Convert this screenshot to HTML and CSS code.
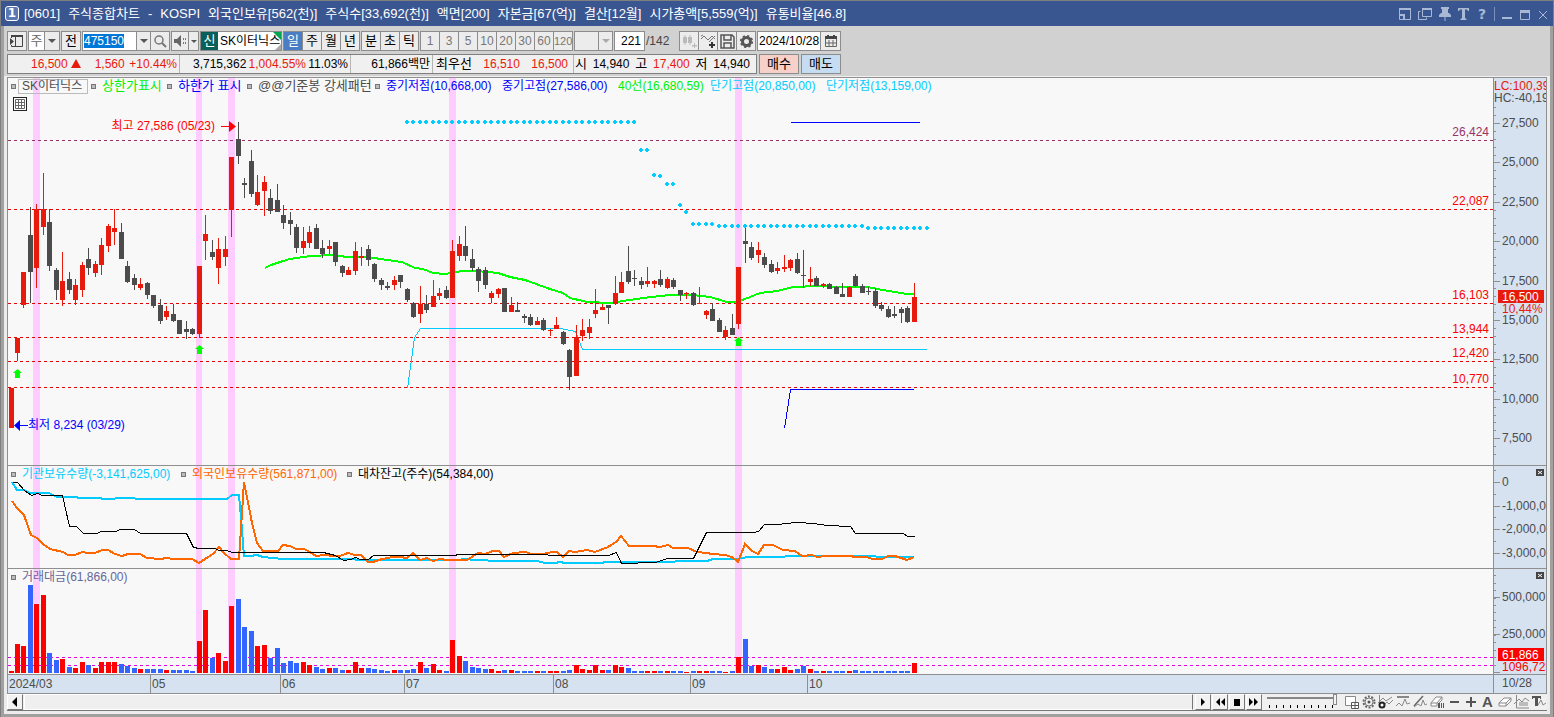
FILE: index.html
```html
<!DOCTYPE html>
<html lang="ko">
<head>
<meta charset="utf-8">
<title>[0601] 주식종합차트</title>
<link rel="stylesheet" href="styles.css">
</head>
<body>
<div class="window">
  <header class="titlebar">
    <span class="win-no">1</span>
    <h1 class="title">
      <span>[0601]</span><span>주식종합차트</span><span>-</span><span>KOSPI</span><span>외국인보유[562(천)]</span><span>주식수[33,692(천)]</span><span>액면[200]</span><span>자본금[67(억)]</span><span>결산[12월]</span><span>시가총액[5,559(억)]</span><span>유통비율[46.8]</span>
    </h1>
    <div class="win-tools">
      <button aria-label="축소"><svg width="14" height="14"><path d="M1.500 1.500h11v11h-11z" fill="none" stroke="currentColor"/><path d="M1 1h12v2H1z M1 7h6v6H5V9H1z" fill="currentColor"/></svg></button>
      <button aria-label="복제"><svg width="14" height="14"><path d="M4.500 1.500h9v8h-9z M2.500 4.500h-2v8h8v-2" fill="none" stroke="currentColor"/><path d="M4 1h10v2H4z" fill="currentColor"/></svg></button>
      <button aria-label="고정"><svg width="14" height="14"><path d="M3 0h8v2h-1v4h1l2 2v2H1V8l2-2h1V2H3z M6.500 10h1v4h-1z" fill="currentColor"/></svg></button>
      <button aria-label="글꼴"><svg width="11" height="14"><path d="M0 1h11v3h-1l-1-1.500H7V11l1.500 1v1h-6v-1L4 11V2.500H2L1 4H0z" fill="currentColor"/></svg></button>
      <button aria-label="도움말" class="t-help">?</button>
      <i class="sep"></i>
      <button aria-label="최소화"><svg width="12" height="14"><path d="M1 10h10v2H1z" fill="currentColor"/></svg></button>
      <button aria-label="최대화"><svg width="12" height="14"><path d="M1.500 3.500h9v9h-9z" fill="none" stroke="currentColor"/><path d="M1 3h10v3H1z" fill="currentColor"/></svg></button>
      <button aria-label="닫기"><svg width="12" height="14"><path d="M2 4l8 8M10 4l-8 8" stroke="currentColor" stroke-width="1"/></svg></button>
    </div>
  </header>

  <div class="frame">
    <div class="bars">
      <div class="toolbar">
        <button class="btn" aria-label="패널"><svg width="14" height="14"><path d="M1.500 4V1.500h11v11h-11V11" fill="none" stroke="#444"/><path d="M1 1h12v2H1z M0 4l4 3.500L0 11z M5 3h1v10H5z" fill="#444"/></svg></button>
        <div class="group">
          <button class="cell week">주</button><button class="cell drop" aria-label="주기 선택"><i class="caret"></i></button>
        </div>
        <button class="btn">전</button>
        <div class="group code">
          <input class="code-input" id="code" value="475150" aria-label="종목코드"><button class="cell drop" aria-label="종목 목록"><i class="caret"></i></button><button class="cell find" aria-label="검색"><svg width="13" height="13"><circle cx="5" cy="5" r="4" fill="none" stroke="#777" stroke-width="1.500"/><path d="M8 8l4 4" stroke="#777" stroke-width="2"/></svg></button>
        </div>
        <div class="group">
          <button class="cell sound" aria-label="소리"><svg width="13" height="12"><path d="M0 4h3l4-4v12L3 8H0z" fill="#666"/><path d="M9 3h1v2H9z M11 3h1v2h-1z M9 7h1v2H9z M11 7h1v2h-1z" fill="#777"/></svg></button><button class="cell mini" aria-label="소리 설정"><i class="caret"></i></button>
        </div>
        <div class="stock"><b>신</b><span>SK이터닉스</span></div>
        <div class="group periods"><button class="cell on">일</button><button class="cell">주</button><button class="cell">월</button><button class="cell">년</button></div>
        <div class="group periods"><button class="cell">분</button><button class="cell">초</button><button class="cell">틱</button></div>
        <div class="group periods dim"><button class="cell">1</button><button class="cell">3</button><button class="cell">5</button><button class="cell">10</button><button class="cell">20</button><button class="cell">30</button><button class="cell">60</button><button class="cell">120</button></div>
        <div class="group blank"><button class="cell drop" aria-label="분 선택" disabled><i class="caret pale"></i></button></div>
        <input class="count" value="221" aria-label="표시 개수"><span class="total">/142</span>
        <div class="group tools">
          <button class="cell" aria-label="차트 추가" disabled><svg width="15" height="15"><path d="M1 3h4v6H1z M6 3h4v6H6z M2.500 1h1v10h-1z M7.500 1h1v10h-1z M10 11h5v1.500h-5z M12 9h1v5h-1z" fill="#bbb"/></svg></button><button class="cell" aria-label="지표 추가"><svg width="15" height="15"><path d="M0 5l3-3 4 4 4-4 3 3M0 2l2-1M8 8l6-6" fill="none" stroke="#777"/><path d="M8 10h6v2H8z M10 8h2v6h-2z" fill="#333"/></svg></button><button class="cell" aria-label="저장"><svg width="15" height="15"><path d="M1 1h11l2 2v11H1z M4 1v5h7V1 M4 14V9h7v5" fill="none" stroke="#555" stroke-width="1.500"/></svg></button><button class="cell" aria-label="설정"><svg width="15" height="15"><circle cx="7.500" cy="7.500" r="4" fill="none" stroke="#555" stroke-width="3"/><circle cx="7.500" cy="7.500" r="5.800" fill="none" stroke="#555" stroke-width="1.600" stroke-dasharray="2.200 2.350"/></svg></button>
        </div>
        <div class="group date"><input class="date-input" value="2024/10/28" aria-label="기준일"><button class="cell" aria-label="달력"><svg width="12" height="12"><path d="M.500 2.500h11v9H.500z M4 5v6M8 5v6M1 8h10" fill="none" stroke="#666"/><path d="M0 1h12v3H0z M2 0h2v2H2z M8 0h2v2H8z" fill="#444"/></svg></button></div>
      </div>

      <div class="quote">
        <div class="quote-box">
          <div class="q q1"><span class="up">16,500 <i class="tri"></i></span><span class="up v2">1,560</span><span class="up v3">+10.44%</span></div>
          <div class="q q2"><span>3,715,362</span><span class="up">1,004.55%</span><span>11.03%</span></div>
          <div class="q q3"><span>61,866백만</span></div>
          <div class="q q4"><b>최우선</b><span class="up">16,510</span><span class="up">16,500</span></div>
          <div class="q q5"><b>시</b><span>14,940</span><b>고</b><span class="up">17,400</span><b>저</b><span>14,940</span></div>
        </div>
        <button class="trade buy">매수</button>
        <button class="trade sell">매도</button>
      </div>
    </div>

    <main class="chart">
      <section class="pane price">
        <svg class="plot" id="price"></svg>
        <div class="legend">
          <i class="mk"></i><span class="name">SK이터닉스</span>
          <i class="mk"></i><span class="ko w66 green">상한가표시</span>
          <i class="mk"></i><span class="ko w70 blue">하한가 표시</span>
          <i class="mk"></i><span class="ko w118 dark">@@기준봉 강세패턴</span>
          <i class="mk"></i><span class="w116 blue">중기저점(10,668,00)</span>
          <span class="w116 blue">중기고점(27,586,00)</span>
          <span class="w92 green">40선(16,680,59)</span>
          <span class="w116 cyan">단기고점(20,850,00)</span>
          <span class="w116 cyan">단기저점(13,159,00)</span>
        </div>
        <button class="grid-btn" aria-label="표"><svg width="12" height="12"><path d="M1.500 1.500h9v9h-9z M1 4.500h10 M1 7.500h10 M4.500 1v10 M7.500 1v10" fill="none" stroke="#666"/></svg></button>
      </section>
      <svg class="axis price-axis" id="price-axis"></svg>

      <section class="pane hold">
        <svg class="plot" id="hold"></svg>
        <div class="legend">
          <i class="mk"></i><span class="w160 cyan">기관보유수량(-3,141,625,00)</span>
          <i class="mk"></i><span class="w156 orange">외국인보유수량(561,871,00)</span>
          <i class="mk"></i><span class="black">대차잔고(주수)(54,384,00)</span>
        </div>
      </section>
      <svg class="axis hold-axis" id="hold-axis"></svg>

      <section class="pane vol">
        <svg class="plot" id="vol"></svg>
        <div class="legend"><i class="mk"></i><span class="violet">거래대금(61,866,00)</span></div>
      </section>
      <svg class="axis vol-axis" id="vol-axis"></svg>

      <svg class="dates" id="dates"></svg>
      <div class="last-date">10/28</div>
    </main>

    <footer class="bottom">
      <button class="sb" aria-label="왼쪽"><svg width="8" height="10"><path d="M6 0v10L1 5z"/></svg></button>
      <div class="track"></div>
      <button class="sb" aria-label="오른쪽"><svg width="8" height="10"><path d="M2 1v8l4-4z"/></svg></button>
      <button class="sb" aria-label="뒤로"><svg width="10" height="10"><path d="M5 1v8L1 5z M10 1v8L6 5z"/></svg></button>
      <button class="sb" aria-label="정지"><svg width="8" height="10"><path d="M1 2h6v7H1z"/></svg></button>
      <button class="sb" aria-label="앞으로"><svg width="10" height="10"><path d="M0 1v8l4-4z M5 1v8l4-4z"/></svg></button>
      <div class="speed"><input type="range" min="0" max="10" value="10" aria-label="재생 속도"><i class="ticks"></i></div>
      <div class="draw">
        <button aria-label="창 추가"><svg width="14" height="14"><path d="M.500 1.500h10v9h-10z" fill="#fff" stroke="#888"/><path d="M6.500 7.500h7v6h-7z M10 7v7M6 10.500h8" fill="#fff" stroke="#555"/></svg></button>
        <button aria-label="환경"><svg width="14" height="14"><circle cx="7" cy="7" r="5.500" fill="none" stroke="#666" stroke-width="2" stroke-dasharray="2 1.450"/><circle cx="7" cy="7" r="4" fill="none" stroke="#777"/><circle cx="7" cy="7" r="1.500" fill="#555"/></svg></button>
        <button aria-label="지표"><svg width="16" height="14"><path d="M1.500 0v9M0 8l5-5 3 3 6-4M6 10l3-3 2 2 4-4" fill="none" stroke="#888"/><circle cx="4" cy="10" r="2.500" fill="#fff" stroke="#222" stroke-width="2"/></svg></button>
        <button aria-label="수평선"><svg width="14" height="14"><path d="M1 2h12" stroke="#666" stroke-width="1.500"/><path d="M0 11l3-3 3 3 3-7 2 5 3-1" fill="none" stroke="#888"/></svg></button>
        <button aria-label="추세선"><svg width="14" height="14"><path d="M1 11L10 1" stroke="#666" stroke-width="1.500"/><path d="M1 12l4-3 3 2 2-6 2 5 2-1" fill="none" stroke="#888"/></svg></button>
        <button aria-label="전체 지우기"><svg width="14" height="14"><path d="M1 8l5-6h6l-5 6z M1 8v3h6V8 M12 2v3l-3 3" fill="#fff" stroke="#888"/><path d="M8 8h2v5H8z M11 8h1v5h-1z M13 8h1v5h-1z" fill="#555"/></svg></button>
        <button aria-label="축소"><svg width="14" height="14"><path d="M3 6h9v2H3z" fill="#555"/></svg></button>
        <button aria-label="확대"><svg width="14" height="14"><path d="M2 6h10v2H2z M6 2h2v10H6z" fill="#555"/></svg></button>
        <button aria-label="문자" class="glyph">A</button>
        <button aria-label="지우개"><svg width="14" height="14"><path d="M1 8l5-5h7l-5 5z M1 8v3h7V8 M13 3v3l-5 5" fill="#fff" stroke="#888"/></svg></button>
        <button aria-label="분석"><svg width="16" height="14"><path d="M2.500 0v13H15M0 9l5-5 3 3 3-4 4 3M5 10h9M5 8h9" fill="none" stroke="#888"/></svg></button>
        <button aria-label="텍스트 도구"><svg width="14" height="14"><path d="M0 1h9v3H8V3H6v8H3V3H1v1H0z" fill="#555"/><path d="M6 10l3-5 2 5 3-2" fill="none" stroke="#888"/></svg></button>
      </div>
    </footer>
  </div>
</div>
<script src="app.js"></script>
</body>
</html>
```

FILE: styles.css
```css
* { box-sizing: border-box; }
body {
  margin: 0;
  background: #a0a09e;
  font: 12px/16px "Liberation Sans", "Noto Sans CJK KR", sans-serif;
  color: #000;
}
button, input { font: inherit; color: inherit; margin: 0; padding: 0; border: 0; border-radius: 0; }
button { background: none; }
svg { display: block; }

.window {
  border: 1px solid #7f7f7f;
  border-bottom: 0;
}

/* title bar */
.titlebar {
  display: flex;
  align-items: center;
  height: 25px;
  padding: 0 4px 0 4px;
  background: #3a5691;
  color: #fff;
}
.win-no {
  width: 14px;
  height: 15px;
  border: 1px solid #fff;
  border-radius: 3px;
  background: #5d78b0;
  font: bold 12px/13px "DejaVu Sans", sans-serif;
  text-align: center;
}
.title {
  display: flex;
  gap: 8px;
  flex: 1;
  margin: 0 0 0 5px;
  font-size: 13px;
  font-weight: 400;
  white-space: nowrap;
}
.win-tools { display: flex; align-items: center; color: #a9b8d4; gap: 6px; }
.win-tools button { display: block; height: 16px; min-width: 12px; }
.t-help { font: bold 14px/16px "DejaVu Sans", sans-serif; }
.sep { width: 1px; height: 14px; background: #7d8fb8; }

/* frame */
.frame {
  border: 3px solid #a0a09e;
  border-top: 0;
  border-bottom-width: 4px;
  background: #ececec;
}
.bars { background: #d1d1d1; padding: 5px 3px 2px; border-bottom: 1px solid #f0f0f0; }

.toolbar { display: flex; height: 20px; gap: 1px; }
.btn, .group, .stock, .count {
  height: 20px;
  border: 1px solid #8c8c8c;
  background: #ececec;
}
.btn { width: 20px; display: grid; place-items: center; font-size: 13px; }
.group { display: flex; }
.cell {
  display: grid;
  place-items: center;
  width: 19px;
  height: 18px;
  border-right: 1px solid #8c8c8c;
  background: #ececec;
  font-size: 13px;
}
.group .cell:last-child { border-right: 0; }
.cell.week { width: 16px; background: #fff; color: #666; }
.cell.drop { width: 14px; }
.cell.mini { width: 9px; }
.cell.sound { width: 17px; }
.cell.find { width: 18px; }
.caret { border: 4px solid transparent; border-top-color: #555; border-bottom: 0; }
.mini .caret { border-width: 3px; border-bottom: 0; }
.caret.pale { border-top-color: #aaa; }
.code { background: #fff; }
.code-input { width: 54px; height: 18px; padding-left: 1px; background: #fff; border-right: 1px solid #8c8c8c; outline: 0; }
.code-input::selection { background: #0078d7; color: #fff; }
.stock { position: relative; display: flex; width: 82px; background: #fff; overflow: hidden; white-space: nowrap; }
.stock b { width: 17px; background: #0a6058; color: #fff; font-weight: 400; font-size: 13px; text-align: center; line-height: 18px; }
.stock span { padding-left: 2px; line-height: 18px; }
.stock::before, .stock::after { content: ""; position: absolute; right: 0; border: 4px solid; }
.stock::before { top: 0; border-color: #00a650 #00a650 transparent transparent; }
.stock::after { bottom: 0; border-width: 3px; border-color: transparent #aaa #aaa transparent; }
.cell.on { background: #4a7ec4; color: #fff; }
.periods .cell:last-child { width: 18px; }
.dim .cell { font-size: 12px; color: #777; }
.dim .cell:last-child { font-size: 11px; }
.blank { width: 39px; justify-content: flex-end; }
.blank .cell { border-left: 1px solid #8c8c8c; }
.count { width: 31px; padding-right: 3px; background: #fff; text-align: right; }
.total { line-height: 20px; width: 32px; color: #444; }
.tools { width: 77px; }
.tools .cell:last-child { width: 18px; }
.date-input { width: 63px; height: 18px; padding-left: 1px; border-right: 1px solid #8c8c8c; background: #fff; }

.quote { display: flex; gap: 2px; margin-top: 3px; height: 20px; white-space: nowrap; }
.quote b { font-size: 13px; font-weight: 400; }
.quote-box { display: flex; width: 750px; border: 1px solid #7f7f7f; background: #f0f0f0; line-height: 18px; }
.q { display: flex; justify-content: space-between; border-right: 1px solid #b5b5b5; }
.q:last-child { border-right: 0; }
.up { color: #e81a0c; }
.tri { display: inline-block; border: 5px solid transparent; border-top: 0; border-bottom: 9px solid #e81a0c; }
.q1 { width: 172px; padding: 0 2px 0 23px; }
.q1 .v2 { margin-left: 9px; }
.q2 { width: 171px; padding: 0 2px 0 13px; }
.q3 { width: 82px; justify-content: flex-end; padding-right: 2px; }
.q4 { width: 141px; padding: 0 5px 0 3px; }
.q5 { flex: 1; padding: 0 6px 0 1px; }
.trade { width: 40px; height: 20px; border: 1px solid #8c8c8c; font-size: 13px; }
.buy { background: #f6d0c9; }
.sell { background: #c6dcf2; }

/* chart */
.chart {
  display: grid;
  grid-template-columns: 1fr 53px;
  margin: 0 3px;
  border: 1px solid #8f8f8f;
  background: #f8f8f8;
}
.pane { position: relative; min-width: 0; border-bottom: 1px solid #8f8f8f; overflow: hidden; }
.plot { width: 100%; height: 100%; }
.price, .price-axis { height: 388px; }
.hold, .hold-axis { height: 103px; }
.vol, .vol-axis { height: 106px; }
.axis {
  width: 100%;
  background: #d6e2f0;
  border-left: 1px solid #8f8f8f;
  border-bottom: 1px solid #8f8f8f;
}
.legend { position: absolute; left: 3px; top: 0; display: flex; align-items: center; height: 16px; white-space: nowrap; }
.mk { width: 5px; height: 5px; border: 1px solid #777; background: #bbb; margin-right: 6px; }
.ko { font-size: 13px; }
.name { border: 1px solid #bbb; width: 70px; height: 15px; line-height: 13px; padding-left: 3px; margin: 0 3px 0 -4px; color: #4c4c4c; }
.w66 { width: 65px; }
.w70 { width: 69px; }
.w118 { width: 117px; }
.w116 { width: 116px; }
.w92 { width: 92px; }
.w160 { width: 159px; }
.w156 { width: 155px; }
.green { color: #00f000; }
.blue { color: #00f; }
.dark { color: #4c4c4c; }
.cyan { color: #00ccff; }
.orange { color: #ff6600; }
.black { color: #000; }
.violet { color: #669; }
.grid-btn { position: absolute; left: 5px; top: 19px; width: 14px; height: 14px; border: 1px solid #222; background: #fff; }
.dates, .last-date { height: 18px; background: #d6e2f0; }
.dates { width: 100%; }
.last-date { border-left: 1px solid #8f8f8f; padding-left: 8px; color: #4c4c4c; }

/* bottom bar */
.bottom { display: flex; align-items: stretch; height: 17px; margin: 0 3px 3px; background: #f0f0f0; border-bottom: 1px solid #777; }
.sb { width: 16px; margin-right: 1px; display: grid; place-items: center; background: #f2f2f2; border: 1px solid #fff; border-right-color: #777; border-bottom-color: #777; }
.track { flex: 1; margin-right: 2px; background: #efefef; border: 1px solid #fff; border-right-color: #777; }
.speed { width: 72px; margin-left: 4px; display: flex; flex-direction: column; }
.speed input { appearance: none; width: 70px; height: 11px; background: linear-gradient(#888, #888) 0 3px / 100% 2px no-repeat; }
.speed input::-webkit-slider-thumb { appearance: none; width: 4px; height: 11px; background: #f4f4f4; border: 1px solid #888; }
.ticks { height: 3px; margin-left: 2px; background: repeating-linear-gradient(90deg, #000 0 1px, transparent 1px 7px); width: 68px; }
.draw { display: flex; width: 204px; margin-left: 4px; }
.draw button { width: 17px; display: grid; place-items: center; }
.glyph { font: bold 15px/16px "Liberation Sans", sans-serif; color: #555; }
```

FILE: app.js
```js
const RED = '#e81a0c', GRAY = '#4c4c4c';

// colour, high, body top, body bottom, low
const candles = `R388,388,428,428 R338,338,353,361 R272,272,305,308 G207,235,272,303 R204,209,268,288 R173,209,227,235
G209,222,266,271 G268,270,290,300 R252,281,300,306 G272,279,290,294 R279,285,300,305 R262,265,290,297
G248,259,268,275 R261,264,273,277 R238,245,265,275 R224,226,246,252 R209,228,232,245 G223,232,259,259
G261,266,282,283 G274,278,285,290 R278,284,288,290 G282,283,295,299 G295,295,306,308 G299,305,321,324
R306,311,317,320 G304,314,321,322 G320,320,334,334 G321,329,332,339 G328,329,334,335 R266,266,334,338
R215,234,241,260 G240,252,257,260 R238,249,268,284 R236,249,257,266 R157,157,210,237 G122,139,156,164
G178,183,185,198 G150,161,194,197 R175,192,205,206 R176,182,191,216 G189,198,211,214 G184,200,212,212
G205,215,223,229 G212,220,224,235 G224,227,248,253 R227,241,248,254 R226,232,243,248 G224,228,249,249
G240,248,254,258 R240,246,249,254 G242,242,262,266 G265,266,273,277 R267,270,275,275 R242,251,271,275
R247,256,258,266 G245,249,260,266 G263,264,279,282 G278,280,285,290 G282,286,288,290 R276,280,285,290
G275,275,282,288 G288,289,300,302 G302,303,317,318 R286,304,314,323 G295,304,310,313 R280,296,307,307
R288,293,296,300 G286,290,298,299 R240,251,298,298 R236,244,256,261 G226,246,256,261 G249,259,268,271
G267,269,281,292 G267,270,285,289 R291,293,298,303 R288,289,294,298 G288,288,312,312 R297,305,312,312
G302,310,312,312 G314,316,318,323 G314,317,325,326 R317,321,325,325 G318,320,330,331 R329,330,331,336
R317,325,329,329 G331,332,344,345 G349,350,377,390 R325,337,376,376 R319,330,336,341 R319,327,333,339
R289,310,314,318 R304,307,310,310 G305,305,308,324 R276,293,304,305 R272,282,293,293 G246,271,282,284
G270,278,279,286 G277,281,285,289 R267,281,284,287 R280,281,284,288 G270,279,285,287 R277,279,288,289
G278,280,287,289 G290,290,295,301 R292,293,294,299 G292,293,305,306 R287,303,304,304 R310,311,315,319
G303,309,321,321 G318,320,332,332 R326,330,337,340 G314,328,335,335 R267,267,324,329 G228,241,244,263
G242,247,258,260 R242,250,255,263 G253,257,265,268 G260,264,272,273 R262,268,271,274 R255,267,269,272
R259,260,268,271 G253,259,273,274 G250,275,276,288 R267,279,282,286 G276,278,286,286 R283,284,286,288
G283,284,289,289 G286,287,294,294 G283,294,297,297 R286,287,297,297 G274,276,286,287 G284,286,293,293
G287,291,292,295 G288,291,306,308 G302,305,309,311 G306,309,317,318 G306,314,316,318 G307,309,313,323
G306,308,322,323 R283,297,322,322`.split(/\s+/).map(s => [s[0], ...s.slice(1).split(',').map(Number)]);

// colour and bar top
const volume = `R671 R644 R646 B585 R604 R595 B653 B660 R659 B667 R668 R662 B665 R668 R662 R662 R662 B664 B666 B668
R669 B669 B669 B669 R670 B670 B670 B670 B671 R641 R610 B658 R653 R661 R606 B599 B627 B631 R646 R645
B658 B648 B663 B661 B663 R662 R665 B667 B669 R668 B668 B670 R670 R662 R668 B668 B669 B670 B671 R670
B670 B670 B669 R662 B668 R664 R670 B671 R640 R656 B661 B667 B668 B669 R669 R671 B670 R670 B671 B671
B671 R671 B671 R671 R671 B671 B670 R665 R669 R670 R665 R670 B670 R665 R667 B668 B671 B671 R671 R671
B671 R671 B671 B671 R672 B671 R671 R671 B671 B671 R672 B671 R657 B639 B666 R665 B667 B669 R669 R667
R670 B669 B666 R669 B671 R671 B671 B671 B671 R671 B670 B671 B671 B671 B671 B671 B671 B671 B671 R663`.split(/\s+/);

const ma40 = '265,268 271,265 283,261 290,259 310,256 333,255 347,257 368,257 387,260 402,262 415,268 423,269 433,273 445,274 462,271 477,271 498,273 510,277 525,280 550,289 563,293 570,298 587,302 610,303 623,301 643,298 670,295 693,295 710,297 727,302 737,302 750,297 760,293 777,291 793,287 817,286 843,287 867,287 883,290 907,294 915,294';
const inst = '12,482 17,490 24,490 30,493 49,493 57,497 75,497 80,498 100,498 103,499 113,499 117,498 133,498 137,499 227,499 232,495 239,495 241,517 244,556 250,556 257,555 263,557 283,559 353,559 358,560 457,560 465,559 475,560 500,561 537,561 545,563 555,563 560,562 565,563 602,563 605,562 673,562 677,561 707,561 713,559 737,559 748,557 783,557 787,556 875,556 877,557 914,557';
const foreign = '12,501 17,508 24,515 31,535 37,538 43,544 50,549 63,552 68,555 75,555 82,552 88,553 95,553 102,550 108,550 115,554 122,556 128,554 140,554 147,558 160,559 167,558 173,559 192,559 199,563 205,559 213,554 219,547 224,553 231,559 239,559 244,482 252,523 257,543 263,551 278,551 283,545 290,546 296,549 304,549 310,552 316,556 325,555 333,556 340,556 348,553 355,555 361,555 368,562 373,562 382,559 393,557 400,557 407,558 413,553 420,560 427,558 433,561 440,559 447,560 467,560 478,553 485,554 493,551 499,551 504,557 513,553 525,552 532,554 543,554 552,552 557,552 563,557 569,551 575,552 587,550 595,552 608,547 616,542 621,536 629,546 653,546 660,547 668,545 673,548 688,548 697,552 707,553 712,554 725,555 732,557 738,562 745,544 752,551 758,554 764,545 773,545 783,550 795,551 802,556 812,555 817,557 825,556 850,556 855,557 867,557 872,559 882,559 888,556 895,556 907,560 914,557';
const loan = '12,482 17,482 24,490 31,495 37,493 42,495 62,495 69,526 76,526 83,533 97,533 100,531 115,531 120,529 134,529 140,533 186,533 193,547 199,548 215,548 218,550 226,550 232,552 323,552 335,555 343,560 350,559 355,557 360,559 368,559 373,555 455,555 457,554 547,554 548,555 608,555 616,552 621,563 637,563 638,562 655,562 667,558 693,558 706,532 753,532 758,531 764,524 780,524 783,523 798,522 813,523 827,525 850,526 855,533 903,533 907,536 914,536';

const xAt = i => Math.max(11, Math.floor(6.5 * i + 10.5));
const rect = (x, y, w, h, fill) => `<rect x="${x}" y="${y}" width="${w}" height="${h}" fill="${fill}"/>`;
const poly = (pts, color, w) => `<polyline points="${pts}"${w === 1 ? ' transform="translate(.5 .5)"' : ''} fill="none" stroke="${color}" stroke-width="${w}" shape-rendering="crispEdges"/>`;
const dashed = (y, color) => `<line x1="0" x2="100%" y1="${y + .5}" y2="${y + .5}" stroke="${color}" stroke-dasharray="3 3"/>`;
const text = (x, y, s, fill, anchor) => `<text x="${x}" y="${y}" fill="${fill}"${anchor ? ` text-anchor="${anchor}"` : ''}>${s}</text>`;
const LEFT = 8;
const place = (top, body) => `<g transform="translate(${-LEFT} ${-top})">${body}</g>`;
const bands = (top, h) => [[33, 7], [196, 6], [228, 7], [449, 7], [735, 7]].map(([x, w]) => rect(x, top, w, h, '#ffccff')).join('');
const show = (id, html) => { document.getElementById(id).innerHTML = html; };

// price pane
const P = 78;
const levels = [[140, '26,424', '#993366'], [209, '22,087', '#f00'], [303, '16,103', '#f00'], [337, '13,944', '#f00'], [361, '12,420', '#f00'], [387, '10,770', '#f00']];
const dotY = i => i < 97 ? 122 : i < 99 ? 150 : i < 100 ? 175 : i < 101 ? 176 : i < 103 ? 184 : i < 104 ? 205 : i < 105 ? 212 : i < 109 ? 224 : i < 132 ? 226 : 228;
const lines = levels.map(([y, , c]) => dashed(y - P, c === '#f00' ? '#e00000' : c)).join('');
let over = poly(ma40, '#00ff00', 2);
over += poly('407,388 414,337 420,328 560,328 575,331 582,349 926,349', '#00ccff', 1);
candles.forEach(([c, hi, top, bot, lo], i) => {
  const x = xAt(i), col = c === 'R' ? RED : GRAY;
  over += rect(x, hi, 1, Math.max(1, lo - hi), col) + rect(x - 2, top, 5, Math.max(1, bot - top), col);
});
for (let i = 61; i <= 141; i++) {
  const x = xAt(i), y = dotY(i);
  over += rect(x - 2, y - 1, 4, 2, '#00ccff') + rect(x - 1, y - 2, 2, 4, '#00ccff');
}
over += poly('790,122 919,122', '#00f', 1) + poly('784,428 790,389 913,389', '#00f', 1);
[[17, 369], [199, 345], [738, 337]].forEach(([x, y]) => {
  over += `<path d="M${x + .5} ${y}l4.500 4h-2v5h-5v-5h-2z" fill="#00ff00"/>`;
});
over += '<path d="M221 126h8v-5l7 5.500-7 5.500v-5h-8z" fill="#f00"/>' + text(215, 130, '최고 27,586 (05/23)', '#f00', 'end');
over += '<path d="M28 425h-8v-5l-6 5.500 6 5.500v-5h8z" fill="#00f"/>' + text(28, 429, '최저 8,234 (03/29)', '#00f');
show('price', place(P, bands(P, 388)) + lines + place(P, over) +
  `<svg x="100%" overflow="visible">${levels.map(([y, s, c]) => text(-4, y - P - 4, s, c, 'end')).join('')}</svg>`);

// holdings pane
const H = 466;
show('hold', place(H, bands(H, 103) + poly(inst, '#00ccff', 2) + poly(foreign, '#ff6600', 2) + poly(loan, '#000', 1)));

// turnover pane
const V = 569;
show('vol', place(V, bands(V, 104)) + dashed(657 - V, '#e000e0') + dashed(665 - V, '#e000e0') +
  place(V, volume.map((s, i) => rect(xAt(i) - 2, +s.slice(1), 5, 673 - s.slice(1), s[0] === 'R' ? '#ff0000' : '#3366ff')).join('')));

// value axes
const tick = (y, w) => rect(0, y, w, 1, '#8f8f8f');
let a = text(0, 12, 'LC:100,39', RED) + text(0, 24, 'HC:-40,19', GRAY);
['27,500', '25,000', '22,500', '20,000', '17,500', '15,000', '12,500', '10,000', '7,500'].forEach((s, i) => {
  const y = Math.round(45 + i * 39.4);
  a += tick(y, 6) + text(8, y + 4, s, GRAY);
});
for (let k = -2; k < 43; k++) if (k % 5) a += tick(Math.round(45 + k * 7.88), 2);
a += rect(7, 226, 38, 10, '#d6e2f0') + rect(4, 212, 46, 13, RED) + text(8, 223, '16,500', '#fff') + text(8, 235, '10,44%', RED);
show('price-axis', a);

const close = y => rect(42, y, 8, 7, '#444') + `<path d="M44 ${y + 2}l4 3m0-3l-4 3" stroke="#fff"/>`;
a = close(3);
['0', '-1,000,0', '-2,000,0', '-3,000,0'].forEach((s, i) => {
  const y = Math.round(16 + i * 23.7);
  a += tick(y, 6) + text(8, y + 4, s, GRAY) + tick(y - 12, 2);
});
show('hold-axis', a);

a = close(3) + tick(28, 6) + text(8, 32, '500,000', GRAY) + tick(65, 6) + text(8, 69, '250,000', GRAY) + tick(103, 6);
for (let k = 0; k < 14; k++) a += tick(Math.round(103 - k * 7.45), 2);
a += rect(4, 79, 46, 13, '#f00') + text(8, 90, '61,866', '#fff') + text(8, 102, '1096,72', '#f00');
show('vol-axis', a);

// date axis
show('dates', text(1, 13, '2024/03', GRAY) + [[150, '05'], [280, '06'], [404, '07'], [553, '08'], [690, '09'], [807, '10']]
  .map(([x, s]) => rect(x - LEFT, 0, 1, 18, '#8f8f8f') + text(x - LEFT + 2, 13, s, GRAY)).join(''));

const code = document.getElementById('code');
code.focus();
code.select();
```
